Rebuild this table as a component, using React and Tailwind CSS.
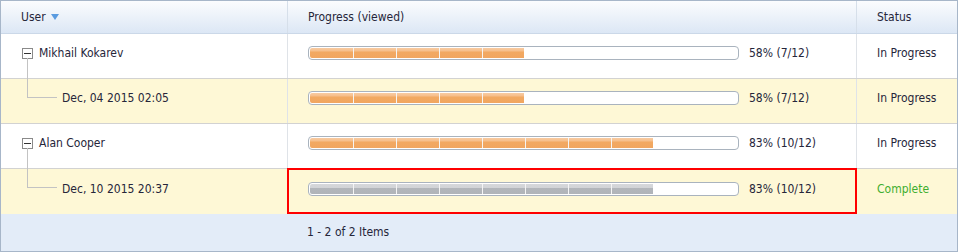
import React from "react";

const font = { fontFamily: '"DejaVu Sans Condensed", Tahoma, "DejaVu Sans", sans-serif' };

function Bar({ filled, gray }) {
  const segs = Array.from({ length: filled });
  return (
    <div className="w-[431px] h-[14px] border border-[#a9b3be] rounded-[4px] bg-white p-px shrink-0">
      <div className="flex h-[10px] rounded-l-[2px] overflow-hidden">
        {segs.map((_, i) => (
          <div
            key={i}
            style={{ width: i === filled - 1 ? 42 : 43 }}
            className={
              (i > 0 ? "border-l border-[#f4f4f4] " : "") +
              (gray
                ? "h-full bg-[linear-gradient(#d6d8db_0%,#d2d4d7_35%,#b2b6bb_40%,#b0b4b9_100%)]"
                : "h-full bg-[linear-gradient(#f8cba2_0%,#f6be8a_30%,#f2a962_40%,#f1a660_100%)]")
            }
          />
        ))}
      </div>
    </div>
  );
}

function Row({ yellow, last, user, child, filled, pct, status, gray, selected, treeTop }) {
  const bg = yellow ? "bg-[#fef8d6]" : "bg-white";
  return (
    <div className={"flex h-[45px] " + (last ? "h-[44px] " : "border-b border-[#d2d2d2] ") + bg}>
      <div className="relative w-[287px] border-r border-[#dfe3e8] flex items-center pb-[6px]">
        {child ? (
          <>
            <span className="absolute left-[26px] top-0 w-[30px] h-[19px] border-l border-b border-[#c3c3c3]" />
            <span className="pl-[61px] text-[12px] text-[#26263a]">{child}</span>
          </>
        ) : (
          <>
            <span className="absolute left-[26px] top-[24px] bottom-[-1px] border-l border-[#c3c3c3]" />
            <span className="ml-[21px] w-[11px] h-[11px] border border-[#8a8a8a] bg-white flex items-center justify-center">
              <span className="w-[7px] h-px bg-[#333]" />
            </span>
            <span className="ml-[6px] text-[12px] text-[#26263a]">{user}</span>
          </>
        )}
      </div>
      <div className="relative w-[569px] border-r border-[#dfe3e8] flex items-center pl-[20px] pb-[6px]">
        <Bar filled={filled} gray={gray} />
        <span className="ml-[10px] text-[12px] text-[#26263a]">{pct}</span>
        {selected && (
          <span className="absolute -left-px -top-px bottom-0 -right-px border-2 border-[#ff0000]" />
        )}
      </div>
      <div className="flex-1 flex items-center pl-[20px] pb-[6px]">
        <span className={"text-[12px] " + (status === "Complete" ? "text-[#3fae2f]" : "text-[#26263a]")}>
          {status}
        </span>
      </div>
    </div>
  );
}

export default function App() {
  return (
    <div style={font} className="w-[958px] h-[252px] border border-[#a7b6c9] bg-white flex flex-col">
      <div className="flex h-[33px] border-b border-[#cbd8e8] bg-[linear-gradient(#fbfcfe,#dce7f5)]">
        <div className="w-[287px] border-r border-[#d6dfea] flex items-center pl-[20px] text-[12px] text-[#26263a]">
          User
          <svg width="8" height="6" viewBox="0 0 8 6" className="ml-[5px]">
            <path d="M0 0 H8 L4 6 Z" fill="#5a9be0" />
          </svg>
        </div>
        <div className="w-[569px] border-r border-[#d6dfea] flex items-center pl-[20px] text-[12px] text-[#26263a]">
          Progress (viewed)
        </div>
        <div className="flex-1 flex items-center pl-[20px] text-[12px] text-[#26263a]">Status</div>
      </div>
      <Row user="Mikhail Kokarev" filled={5} pct="58% (7/12)" status="In Progress" />
      <Row yellow child="Dec, 04 2015 02:05" filled={5} pct="58% (7/12)" status="In Progress" />
      <Row user="Alan Cooper" filled={8} pct="83% (10/12)" status="In Progress" />
      <Row yellow last child="Dec, 10 2015 20:37" filled={8} pct="83% (10/12)" status="Complete" gray selected />
      <div className="flex-1 bg-[#e3ecf8] flex items-center pl-[306px] pb-[2px] text-[12px] text-[#26263a]">
        1 - 2 of 2 Items
      </div>
    </div>
  );
}
